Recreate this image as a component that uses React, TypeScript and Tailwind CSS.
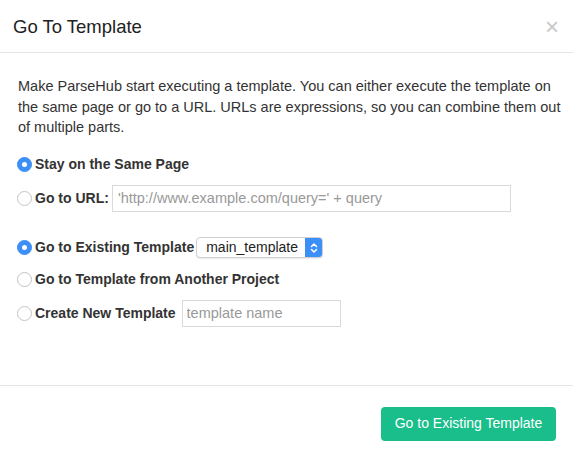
import { useState } from 'react';

type Choice = 'same' | 'url';
type Target = 'existing' | 'another' | 'new';

function Radio({ checked, onClick }: { checked: boolean; onClick: () => void }) {
  return (
    <button
      type="button"
      onClick={onClick}
      className={`flex h-[15px] w-[15px] shrink-0 items-center justify-center rounded-full border ${
        checked ? 'border-[#3b8ff7] bg-[#3b8ff7]' : 'border-[#c4c4c4] bg-white'
      }`}
    >
      {checked && <span className="h-[5px] w-[5px] rounded-full bg-white" />}
    </button>
  );
}

export default function App() {
  const [choice, setChoice] = useState<Choice>('same');
  const [target, setTarget] = useState<Target>('existing');

  return (
    <div className="min-h-screen bg-white text-[#333] font-['Liberation_Sans',Arial,sans-serif]">
      {/* Header */}
      <header className="flex h-[53px] items-center justify-between border-b border-[#e5e5e5] pl-[13px] pr-[14px] pt-[1px]">
        <h1 className="text-[18.5px] text-[#222]">Go To Template</h1>
        <button type="button" className="text-[24px] leading-none text-[#c8c8c8]">
          ×
        </button>
      </header>

      {/* Body */}
      <main className="pl-[17px] pr-[17px] pt-[23px] pb-[58px]">
        <p className="-mr-[8px] text-[14.5px] leading-[20.5px] pl-[1px]">
          Make ParseHub start executing a template. You can either execute the template on the same
          page or go to a URL. URLs are expressions, so you can combine them out of multiple parts.
        </p>

        <div className="mt-[17px] flex h-[20px] items-center gap-[3px] text-[14px] font-bold">
          <Radio checked={choice === 'same'} onClick={() => setChoice('same')} />
          <span>Stay on the Same Page</span>
        </div>

        <div className="mt-[10px] flex h-[27px] items-center gap-[3px] text-[14px] font-bold">
          <Radio checked={choice === 'url'} onClick={() => setChoice('url')} />
          <span>Go to URL:</span>
          <input
            className="h-[27px] w-[399px] border border-[#d9d9d9] px-[5px] text-[14.5px] font-normal outline-none placeholder:text-[#999]"
            placeholder="'http://www.example.com/query=' + query"
          />
        </div>

        <div className="mt-[26px] flex h-[20px] items-center gap-[3px] text-[14px] font-bold">
          <Radio checked={target === 'existing'} onClick={() => setTarget('existing')} />
          <span>Go to Existing Template</span>
          <div className="-ml-[1px] flex h-[21px] w-[127px] items-stretch overflow-hidden rounded-[4px] border border-[#d0d0d0] bg-white font-normal shadow-[0_1px_1px_rgba(0,0,0,0.08)]">
            <span className="flex-1 pl-[9px] text-[14px] leading-[19px] text-[#222]">main_template</span>
            <span className="flex w-[17px] items-center justify-center bg-[#3b8ff7]">
              <svg width="8" height="12" viewBox="0 0 8 12" fill="none" stroke="white" strokeWidth="1.5" strokeLinecap="round" strokeLinejoin="round">
                <path d="M1.5 4.5 4 2l2.5 2.5" />
                <path d="M1.5 7.5 4 10l2.5-2.5" />
              </svg>
            </span>
          </div>
        </div>

        <div className="mt-[12px] flex h-[20px] items-center gap-[3px] text-[14px] font-bold">
          <Radio checked={target === 'another'} onClick={() => setTarget('another')} />
          <span>Go to Template from Another Project</span>
        </div>

        <div className="mt-[10px] flex h-[27px] items-center gap-[3px] text-[14px] font-bold">
          <Radio checked={target === 'new'} onClick={() => setTarget('new')} />
          <span>Create New Template</span>
          <input
            className="ml-[3px] h-[27px] w-[159px] border border-[#d9d9d9] px-[4px] text-[14.5px] font-normal outline-none placeholder:text-[#999]"
            placeholder="template name"
          />
        </div>
      </main>

      {/* Footer */}
      <footer className="flex justify-end border-t border-[#e5e5e5] pt-[21px] pr-[17px]">
        <button
          type="button"
          className="h-[34px] w-[175px] rounded-[4px] bg-[#1abe8b] text-[14px] text-white"
        >
          Go to Existing Template
        </button>
      </footer>
    </div>
  );
}
